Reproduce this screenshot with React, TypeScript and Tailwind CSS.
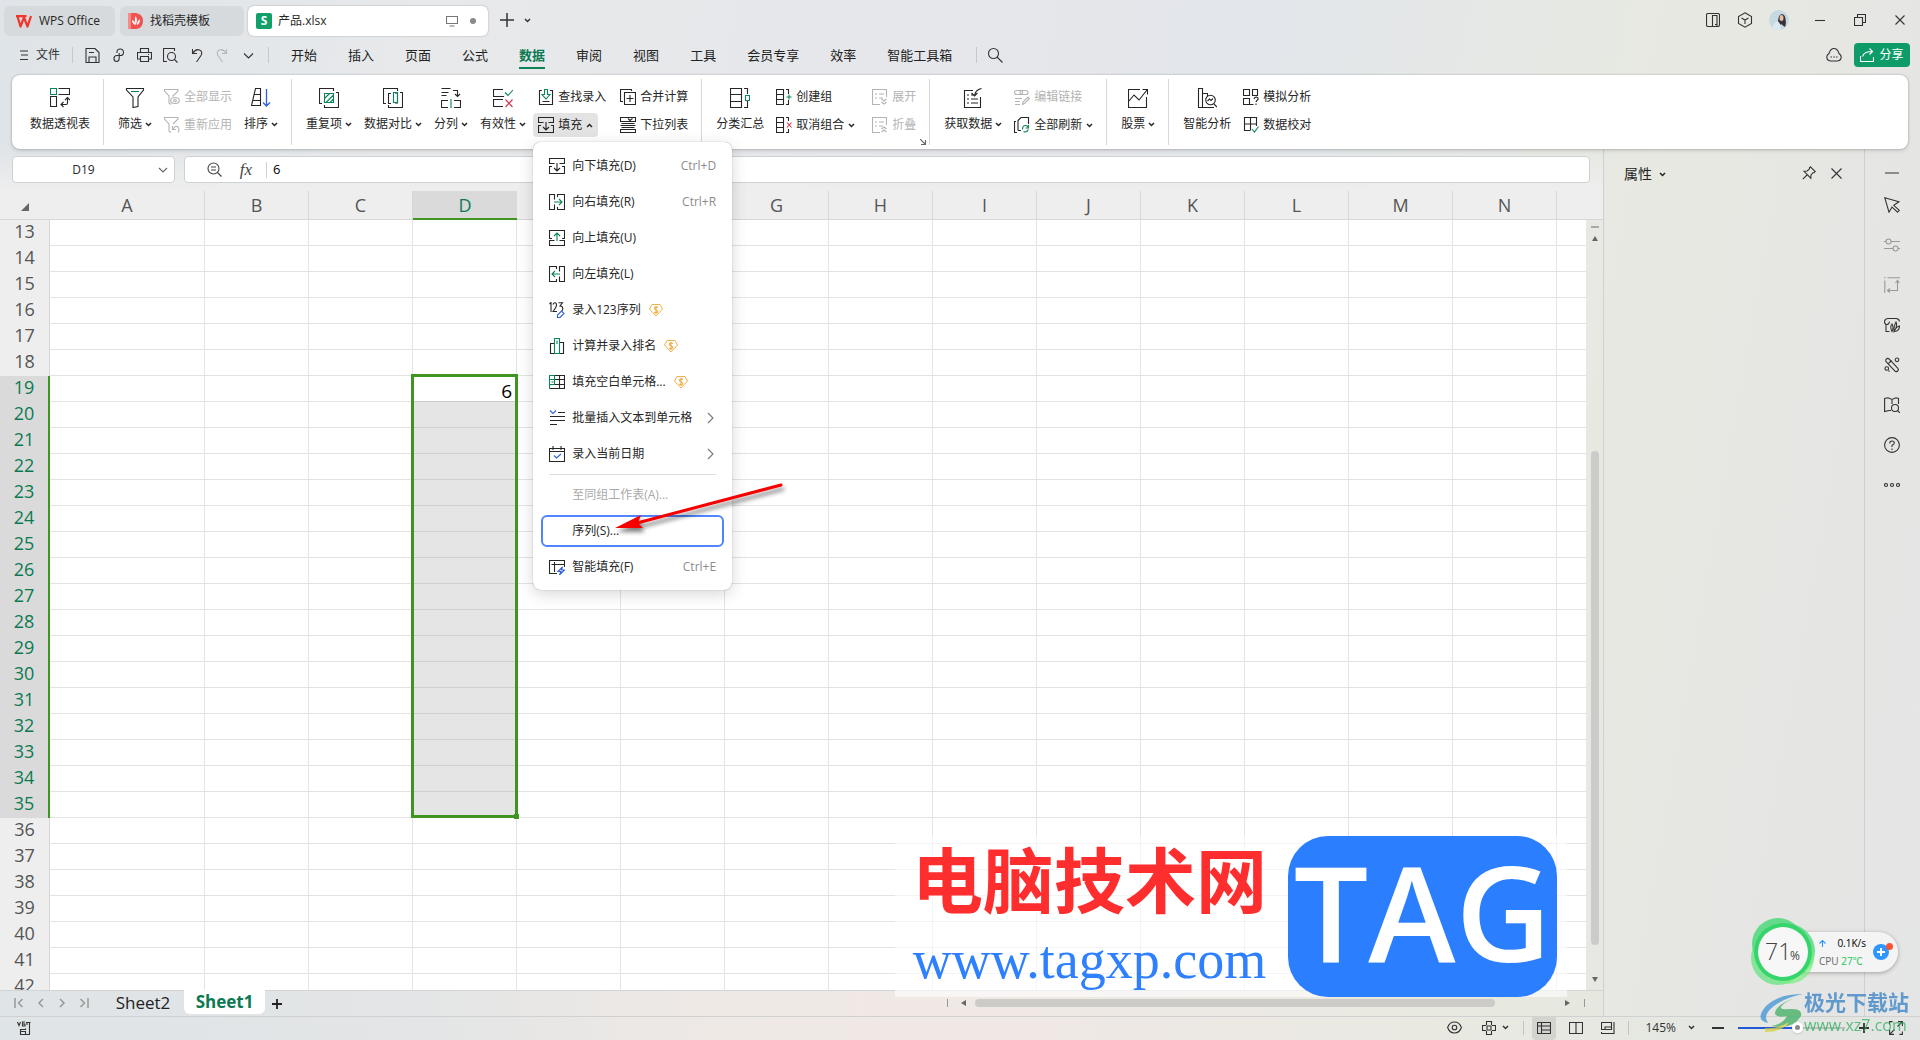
import { ReactNode } from "react";

const COLUMNS = ["A", "B", "C", "D", "E", "F", "G", "H", "I", "J", "K", "L", "M", "N"];
const ROWS = Array.from({ length: 30 }, (_, i) => i + 13);
const MENU_TABS = ["开始", "插入", "页面", "公式", "数据", "审阅", "视图", "工具", "会员专享", "效率", "智能工具箱"];

const G = "#0b8457";
const B = "#2f5fe0";
const R = "#d0344f";

interface IconProps {
    size?: number;
    className?: string;
    children: ReactNode;
}

function Icon({ size = 16, className = "", children }: IconProps) {
    return (
        <svg
            width={size}
            height={size}
            viewBox={`0 0 ${size} ${size}`}
            fill="none"
            stroke="currentColor"
            strokeWidth={1.1}
            className={`shrink-0 ${className}`}
            aria-hidden="true"
        >
            {children}
        </svg>
    );
}

function Chevron({ up = false }: { up?: boolean }) {
    return (
        <svg width="7" height="5" viewBox="0 0 7 5" fill="none" stroke="currentColor" strokeWidth="1.5" className="shrink-0" aria-hidden="true">
            <path d={up ? "M1 4l2.5-2.5L6 4" : "M1 1l2.5 2.5L6 1"} />
        </svg>
    );
}

/* ---------- ribbon icons, 20px ---------- */

const pivotIcon = (
    <Icon size={20}>
        <path d="M.5.5h6v6h-6z" stroke={G} />
        <path d="M8.5.5h11v6h-11M.5 8.5h6v10h-6zM11 16.500h5q1.500 0 1.500-1.500V10M13.500 14L11 16.500l2.500 2.500M15 12l2.500-2.500L20 12" />
    </Icon>
);
const filterIcon = (
    <Icon size={20}>
        <path d="M1.500.5h17v1.500L13 9v9.500l-5 1V9L1.500 2z" />
        <path d="M6 3.500h8" stroke={G} />
    </Icon>
);
const sortIcon = (
    <Icon size={20}>
        <path d="M4.500.5h5v17h-9zM3.500 6.500h6M2 12.500h7.500" />
        <path d="M15.500 1v16.500M12 14.500l3.500 3.500 3.500-3.500" stroke={B} strokeWidth={1.300} />
    </Icon>
);
const duplicateIcon = (
    <Icon size={20}>
        <path d="M3 15.500H.5V.5h14V3M17 4.500h2.500v15h-14V17" />
        <path d="M5.500 5.500h9v9h-9zM5.500 10.500l5-5M7 14.500l7.500-7.500M11 14.500l3.500-3.500" stroke={G} />
    </Icon>
);
const compareIcon = (
    <Icon size={20}>
        <path d="M3 15.500H.5V.5h14V3M17 4.500h2.500v15h-14V17M8 5.500H5.500v10H8M12 5h2.500v10H12" />
        <path d="M10.500 4.500h4v10h-4z" stroke={G} />
    </Icon>
);
const splitIcon = (
    <Icon size={20}>
        <path d="M.5.5h9M.5 4.500h7M.5 7.500h5M12 2.500h4.500v6M14 6l2.500 2.500L19 6M7 12.500H.5v7H7M13 12.500h6.500v7H13" />
        <path d="M10 11v9" stroke={G} />
    </Icon>
);
const validIcon = (
    <Icon size={20}>
        <path d="M10 1.500H.5v7H11M10 11.500H.5v7H10" />
        <path d="M12 4.500l3 3 5-5.500" stroke={G} />
        <path d="M12.500 11.500l7 7.500M19.500 11.500l-7 7.500" stroke={R} />
    </Icon>
);
const subtotalIcon = (
    <Icon size={20}>
        <path d="M.5.5h11v19H.5zM.5 6.500h11M.5 13.500h11M14 .5h3.500V6M14 19.500h3.500V13" />
        <path d="M15.500 7.500h4v5h-4z" stroke={G} />
    </Icon>
);
const getDataIcon = (
    <Icon size={20}>
        <path d="M10 2.500H1.500v17h16V9M4 7h2M8 7h2M4 11h2M8 11h7M4 15h2M8 15h7M18.500.5Q12 2 11.500 8M8.500 5l3 3 3-3" />
    </Icon>
);
const stockIcon = (
    <Icon size={20}>
        <path d="M12 1.500H.5v18h18V9M1 13l5-6 5 5 8-10M14.500 1.500h5v5" />
    </Icon>
);
const analysisIcon = (
    <Icon size={20}>
        <path d="M9.500 19.500h-8V.5h4v19M5.500 5.500h5V8M9 19.500h8" />
        <circle cx="13.500" cy="12" r="4.800" />
        <path d="M10.500 13l2-2 1.500 1.500 2-2M17 16l3 3" />
    </Icon>
);

/* ---------- ribbon and menu icons, 16px ---------- */

const showAllIcon = (
    <Icon>
        <path d="M8.500 7.500l5.500-5.500V.5H.5V2l4.500 5V14l2 1.500" />
        <ellipse cx="11" cy="11.500" rx="4.300" ry="3" />
        <circle cx="11" cy="11.500" r="1.300" />
    </Icon>
);
const reapplyIcon = (
    <Icon>
        <path d="M9 7l5-5V.5H.5V2L5 7v7l2 1.500M8.500 9v3.500h3.500M9 12q2.500-4 5-2 2 3 0 5.500" />
    </Icon>
);
const lookupIcon = (
    <Icon>
        <path d="M4 1.500H1.500v14h13v-14H12M4.500 12.500h7" />
        <path d="M6.500.5h3v5H12L8 10 4 5.500h2.500z" stroke={G} />
    </Icon>
);
const fillDownIcon = (
    <Icon>
        <path d="M5.500 5.500h-5v-5h15v5h-5M3 8.500H.5v7h15v-7H13M8 5v8M5 10l3 3 3-3" />
    </Icon>
);
const fillRightIcon = (
    <Icon>
        <path d="M5.500 5.500v-5h-5v15h5v-5M8.500 3V.5h7v15h-7V13" />
        <path d="M5 8h8M10 5l3 3-3 3" stroke={G} />
    </Icon>
);
const fillUpIcon = (
    <Icon>
        <path d="M5.500 10.500h-5v5h15v-5h-5M3 8.500H.5v-8h15v8H13" />
        <path d="M8 11V3M5 6l3-3 3 3" stroke={G} />
    </Icon>
);
const fillLeftIcon = (
    <Icon>
        <path d="M10.500 5.500v-5h5v15h-5v-5M7.500 3V.5h-7v15h7V13" />
        <path d="M11 8H3M6 5L3 8l3 3" stroke={G} />
    </Icon>
);
const consolidateIcon = (
    <Icon>
        <path d="M3 12.500H.5v-12h11V2M4.500 3.500h11v12h-11zM10 6v7M6.500 9.500h7" />
    </Icon>
);
const dropListIcon = (
    <Icon>
        <path d="M.5.5h15v4H.5zM1.500 6.500h13M.5 8.500h15M1.500 10.500h13M.5 12.500h15v3H.5zM8 1.500l2 2 2.500-2" />
    </Icon>
);
const groupIcon = (
    <Icon>
        <path d="M.5.5h7v15h-7zM.5 5.500h7M.5 10.500h7M10 .5h2.500V5M10 15.500h2.500V11" />
        <path d="M13 5.500v5M10.500 8h5" stroke={G} />
    </Icon>
);
const ungroupIcon = (
    <Icon>
        <path d="M.5.5h7v15h-7zM.5 5.500h7M.5 10.500h7M10 .5h2.500V4M10 15.500h2.500V12" />
        <path d="M11 5.500l4.500 5M15.500 5.500l-4.500 5" stroke={R} />
    </Icon>
);
const expandIcon = (
    <Icon>
        <path d="M8 15.500H.5V.5h14V8M3 5h2M7 5h5M3 9h2M7 9h4M9.500 10l2.500 2 2.500-2M9.500 13l2.500 2 2.500-2" />
    </Icon>
);
const collapseIcon = (
    <Icon>
        <path d="M8 15.500H.5V.5h14V8M3 5h2M7 5h5M3 9h2M7 9h4M9.500 12l2.500-2 2.500 2M9.500 15l2.500-2 2.500 2" />
    </Icon>
);
const editLinkIcon = (
    <Icon>
        <rect x=".6" y="1.500" width="8" height="4" rx="2" />
        <rect x="6" y="1.500" width="8" height="4" rx="2" />
        <path d="M1 9.500h7M1 12.500h5M1 15.500h5M8.500 15.500l.5-2.500 5-5 1.500 1.500-5 5z" />
    </Icon>
);
const refreshIcon = (
    <Icon>
        <path d="M3 15.500H.5v-11H2M4 13.500V3.500l3-3h7.500V7M4 13.500h3" />
        <path d="M14.500 8v3h-3M8.500 12.500q0-4 3-4 2 0 3 2M14.500 12.500q-2 3.500-5 2" stroke={G} />
    </Icon>
);
const whatIfIcon = (
    <Icon>
        <path d="M.5.5h6v6h-6zM9.500.5h5v6h-5zM.5 9.500h6v6h-6zM6.500 15.500h4M11 10q.5-2 2.500-2 2 .5 1.500 2.500-1.500 1-2 2.500M13 14.500v1.500" />
    </Icon>
);
const proofIcon = (
    <Icon>
        <path d="M7 13.500H1.500V.5h12V9M1.500 7h12M7.500.5v13" />
        <path d="M9 12l2.500 3L15.500 9.500" stroke={G} />
    </Icon>
);
const seriesIcon = (
    <Icon>
        <path d="M.5 2L2 .5V10M4 2.500q.5-1.800 2-1.800T7.500 3q0 2-3.500 6.500H8M9.500.800h4L11 4q2.800 0 2.800 2.800 0 1.500-1 2" />
        <path d="M8.500 15.500v-2.500l4-4 2.500 2.500-4 4z" stroke={B} />
    </Icon>
);
const rankIcon = (
    <Icon>
        <path d="M5 5.500H1.500v10H5M11 4.500h3.500v11H11" />
        <path d="M5.500.5h5v15h-5zM7.500 3H8v3" stroke={G} />
    </Icon>
);
const blankIcon = (
    <Icon>
        <path d="M5.500 1.500h10v13h-15M10.500 1v14M5.500 5.500h10M5.500 10.500h10" />
        <path d="M5.500 1.500h-5v13M.5 5.500h5v5h-5M2.500 8h2M5.500 1v4" stroke={G} />
    </Icon>
);
const batchIcon = (
    <Icon>
        <path d="M9 2.500h7M1 6.500h15M1 10.500h15M1 14.500h7" />
        <path d="M1 .5l3 3 3-3" stroke={B} />
    </Icon>
);
const dateIcon = (
    <Icon>
        <path d="M.5 2.500h15v13H.5zM.5 5.500h15M4 0v4M12 0v4" />
        <path d="M5 9.500l2.500 2.500L12 8" stroke={B} />
    </Icon>
);
const smartFillIcon = (
    <Icon>
        <path d="M8 14.500H.5V1.500h15V8M2.500 5.500h13M5.500 3v10" />
        <path d="M13.500 8L9 12.500h3L10.500 16l5-5h-3z" stroke={B} />
    </Icon>
);

const MENU_ITEMS = [
    { icon: fillDownIcon, label: "向下填充(D)", hint: "Ctrl+D" },
    { icon: fillRightIcon, label: "向右填充(R)", hint: "Ctrl+R" },
    { icon: fillUpIcon, label: "向上填充(U)" },
    { icon: fillLeftIcon, label: "向左填充(L)" },
    { icon: seriesIcon, label: "录入123序列", vip: true },
    { icon: rankIcon, label: "计算并录入排名", vip: true },
    { icon: blankIcon, label: "填充空白单元格...", vip: true },
    { icon: batchIcon, label: "批量插入文本到单元格", sub: true },
    { icon: dateIcon, label: "录入当前日期", sub: true },
];

function BigButton({ icon, label, drop }: { icon: ReactNode; label: string; drop?: boolean }) {
    return (
        <button className="flex flex-col items-center gap-2 pt-[13px]">
            {icon}
            <span className="flex items-center gap-[3px] leading-4 whitespace-nowrap">
                {label}
                {drop && <Chevron />}
            </span>
        </button>
    );
}

interface SmallButtonProps {
    icon: ReactNode;
    label: string;
    drop?: boolean;
    open?: boolean;
    disabled?: boolean;
}

function SmallButton({ icon, label, drop, open, disabled }: SmallButtonProps) {
    return (
        <button
            disabled={disabled}
            className={`flex h-6 items-center gap-1 rounded px-[5px] whitespace-nowrap ${open ? "bg-[#e3e3e3]" : ""} ${disabled ? "text-[#b4b4b4]" : ""}`}
        >
            {icon}
            <span>{label}</span>
            {drop && <Chevron up={open} />}
        </button>
    );
}

function SmallColumn({ children }: { children: ReactNode }) {
    return <div className="-mx-[5px] flex flex-col items-start gap-1 pt-[10px]">{children}</div>;
}

function Group({ children, last }: { children: ReactNode; last?: boolean }) {
    return (
        <div className="flex">
            <div className="flex items-start gap-3 px-[14px]">{children}</div>
            {!last && <div className="mt-1 -ml-px h-[66px] w-px bg-[#d8d8d8]" />}
        </div>
    );
}

function VipBadge() {
    return (
        <svg width="14" height="14" viewBox="0 0 14 14" fill="none" stroke="#f0b04a" className="shrink-0" aria-hidden="true">
            <path d="M3 1.500h8l2.500 4.500L7 13 .5 6z" />
            <path d="M9 4.500Q7 3.300 5.800 4.500T7 7q2 .6 1.500 2T5 9.300M7 3v8" strokeWidth="1.200" />
        </svg>
    );
}

function FillMenu() {
    return (
        <div className="absolute top-full left-0 z-30 mt-[5px] w-[199px] rounded-lg bg-white pt-2 pb-[7px] shadow-[0_0_1px_rgba(0,0,0,0.45),0_4px_16px_rgba(0,0,0,0.16)]">
            <ul className="flex flex-col gap-1">
                {MENU_ITEMS.map((item) => (
                    <li key={item.label} className="mx-2">
                        <button className="flex h-8 w-full items-center px-2 text-left whitespace-nowrap">
                            {item.icon}
                            <span className="ml-[7px]">{item.label}</span>
                            {item.vip && <span className="ml-2"><VipBadge /></span>}
                            {item.hint && <span className="ml-auto text-[#8c8c8c]">{item.hint}</span>}
                            {item.sub && (
                                <Icon size={12} className="ml-auto text-[#777]">
                                    <path d="M4 1l5 5-5 5" />
                                </Icon>
                            )}
                        </button>
                    </li>
                ))}
                <li className="mx-4 h-px bg-[#dedede]" />
                <li className="mx-2">
                    <button disabled className="flex h-8 w-full items-center pl-[31px] text-[#a9a9a9]">至同组工作表(A)...</button>
                </li>
                <li className="mx-2">
                    <button className="flex h-8 w-full items-center rounded-md border-2 border-[#4f86ff] pl-[29px]">序列(S)...</button>
                </li>
                <li className="mx-2">
                    <button className="flex h-8 w-full items-center px-2">
                        {smartFillIcon}
                        <span className="ml-[7px]">智能填充(F)</span>
                        <span className="ml-auto text-[#8c8c8c]">Ctrl+E</span>
                    </button>
                </li>
            </ul>
            <svg width="190" height="64" viewBox="0 0 190 64" className="pointer-events-none absolute top-[334px] left-[72px] drop-shadow-[2px_4px_2px_rgba(0,0,0,0.5)]" aria-hidden="true">
                <path d="M32 47L176 9" stroke="#f60000" strokeWidth="3" strokeLinecap="round" />
                <path d="M10 52L36 39l-3 8 5 5z" fill="#f60000" />
            </svg>
        </div>
    );
}

function TitleBar() {
    return (
        <div className="flex h-10 items-center pl-1">
            <button className="mt-[2px] flex h-[30px] w-[111px] items-center gap-[7px] rounded-md bg-[#d6dadd] pl-3">
                <svg width="16" height="13" viewBox="0 0 16 13" fill="none" aria-hidden="true">
                    <path d="M0 1.200h10.500M1.500 1.500l3 10 3.500-9 3.500 9L15 1" stroke="#f0352b" strokeWidth="2.200" strokeLinejoin="round" />
                </svg>
                WPS Office
            </button>
            <button className="mt-[2px] ml-[5px] flex h-[30px] w-[124px] items-center gap-[7px] rounded-md bg-[#d6dadd] pl-2">
                <svg width="15" height="16" viewBox="0 0 15 16" aria-hidden="true">
                    <path d="M0 0h8q7 1 7 8t-7 8H0z" fill="#f0524f" />
                    <path d="M0 0h3v16H0z" fill="#f98a86" />
                    <path d="M7.500 3q2.500 3 .5 9-2-4-.5-9zM4 7q3 1 3.500 5Q4 11 4 7zM12 6q-3 2-3 6 3-1 3-6z" fill="#fff" />
                </svg>
                找稻壳模板
            </button>
            <div className="mt-[2px] ml-1 flex h-[30px] w-[240px] items-center rounded-md bg-white pr-3 pl-2 shadow-[0_0_2px_rgba(0,0,0,0.3)]">
                <span className="relative flex size-4 items-center justify-center rounded-xs bg-[#12a06a] font-bold text-white">S</span>
                <span className="ml-[6px]">产品.xlsx</span>
                <Icon size={12} className="ml-auto text-[#777]">
                    <path d="M.5 1.500h11v7H.5zM3.500 11h5" />
                </Icon>
                <span className="ml-3 size-[6px] rounded-full bg-[#8a8a8a]" />
            </div>
            <button aria-label="新建" className="ml-3 text-[#333]">
                <Icon size={14}><path d="M7 0v14M0 7h14" strokeWidth={1.500} /></Icon>
            </button>
            <button aria-label="标签列表" className="ml-[10px] text-[#333]"><Chevron /></button>

            <div className="ml-auto flex items-center text-[#333]">
                <button aria-label="侧栏">
                    <Icon size={14}><rect x=".5" y=".5" width="13" height="13" rx="1.500" /><path d="M6.500 13.500v-11h4.500v11M9 11.500h1.500" /></Icon>
                </button>
                <button aria-label="应用" className="ml-[17px]">
                    <Icon size={16}><path d="M8 .8L14.500 4.500v7L8 15.200 1.500 11.500v-7zM4.500 6L8 8l3.500-2M8 8v4" /></Icon>
                </button>
                <button aria-label="帐户" className="ml-4">
                    <svg width="20" height="20" viewBox="0 0 20 20" className="rounded-full bg-[#c5d9e3]" aria-hidden="true">
                        <path d="M6 17q1-3 3-6 0-6 4-7 3.500 1 3.500 5 1 5-.5 8l-4-3-2 2z" fill="#3a3238" />
                        <ellipse cx="12.500" cy="8" rx="2" ry="3" fill="#e9bfa9" />
                        <path d="M3 20q1-8 6-9l2 3 1 6z" fill="#dbe9f1" />
                    </svg>
                </button>
                <button aria-label="最小化" className="ml-[26px]"><Icon size={10}><path d="M0 5.500h10" /></Icon></button>
                <button aria-label="还原" className="ml-[29px]">
                    <Icon size={12}><path d="M.5 3.500h8v8h-8zM3.500 3.500v-3h8v8h-3" /></Icon>
                </button>
                <button aria-label="关闭" className="mr-[15px] ml-[29px]"><Icon size={10}><path d="M.5.5l9 9M9.500.5l-9 9" /></Icon></button>
            </div>
        </div>
    );
}

function MenuBar() {
    return (
        <div className="flex h-[35px] items-start text-[#333]">
            <button className="flex h-[30px] items-center gap-[6px] pl-5">
                <Icon size={10}><path d="M0 1h8M1 5h7M0 9.500h8" /></Icon>
                文件
            </button>
            <div className="mt-[7px] ml-3 h-4 w-px bg-[#c6c9cc]" />
            <div className="flex h-[30px] items-center gap-[11px] pl-3">
                <button aria-label="保存"><Icon size={15}><path d="M1 .5h9l4 4v10H1zM4 14.500V9h7v5.500M4 4.500h5" /></Icon></button>
                <button aria-label="输出"><Icon size={15}><path d="M6 5V4q0-3 3.200-3t3.300 3.300T9 7.500H6Q3 7.500 3 10.500t2.500 3 2.700-3V5" /></Icon></button>
                <button aria-label="打印"><Icon size={15}><path d="M3.500 4.500v-4h8v4M3.500 11h-3V4.500h14V11h-3M3.500 8.500h8v5h-8zM11 6.500h1" /></Icon></button>
                <button aria-label="打印预览"><Icon size={15}><path d="M4 13.500H.5V.5h11V3M11.500 11.500l3 3" /><circle cx="8.500" cy="8.500" r="4" /></Icon></button>
                <button aria-label="撤销"><Icon size={15}><path d="M3.500 1v4.500H8M3.500 5.500Q7 .500 10.500 2t1.500 5.500L7.500 14" /></Icon></button>
                <button aria-label="恢复" className="text-[#b3b6b9]"><Icon size={15}><path d="M11.500 1v4.500H7M11.500 5.500Q8 .500 4.500 2T3 7.500L7.500 14" /></Icon></button>
                <button aria-label="更多"><Icon size={15}><path d="M3 5.500L7.500 10 12 5.500" /></Icon></button>
            </div>
            <div className="mt-[7px] ml-3 h-4 w-px bg-[#c6c9cc]" />
            <nav className="flex gap-[31px] pl-[22px] text-[13px] text-[#222]">
                {MENU_TABS.map((tab) => (
                    <a
                        key={tab}
                        href="#"
                        className={`h-[29px] border-b-2 pt-[6px] leading-[18px] ${tab === "数据" ? "border-[#0b8457] font-bold text-[#0b7a52]" : "border-transparent"}`}
                    >
                        {tab}
                    </a>
                ))}
            </nav>
            <div className="mt-[7px] ml-6 h-4 w-px bg-[#c6c9cc]" />
            <button aria-label="搜索" className="mt-[7px] ml-[10px]">
                <Icon size={16}><circle cx="6.500" cy="6.500" r="5" /><path d="M10 10l5.500 5.500" /></Icon>
            </button>
            <div className="ml-auto flex items-center gap-3 pt-[3px] pr-[10px]">
                <button aria-label="云同步"><Icon size={16}><path d="M4.500 14Q.8 13.500.8 10q0-2 2.200-3.500Q4.500 1.500 8 1.500t5 5q2.200 1.500 2.200 3.500 0 3.500-3.700 4zM4.500 10h1.500M7.300 10h1.500M10 10h1.500" /></Icon></button>
                <button className="flex h-6 w-14 items-center justify-center gap-[5px] rounded bg-[#0f9b68] text-white">
                    <Icon size={14}><path d="M.5 8v5.500h13V9M2.500 8.500Q4 3.500 12 3.500M9.500.5l3 3-3 3" /></Icon>
                    分享
                </button>
            </div>
        </div>
    );
}

function Ribbon() {
    return (
        <div className="relative z-20 mx-3 flex h-[74px] rounded-lg bg-white pl-1 shadow-[0_0_2px_rgba(0,0,0,0.3),0_2px_4px_rgba(0,0,0,0.12)]">
            <Group>
                <BigButton icon={pivotIcon} label="数据透视表" />
            </Group>
            <Group>
                <BigButton icon={filterIcon} label="筛选" drop />
                <SmallColumn>
                    <SmallButton icon={showAllIcon} label="全部显示" disabled />
                    <SmallButton icon={reapplyIcon} label="重新应用" disabled />
                </SmallColumn>
                <BigButton icon={sortIcon} label="排序" drop />
            </Group>
            <Group>
                <BigButton icon={duplicateIcon} label="重复项" drop />
                <BigButton icon={compareIcon} label="数据对比" drop />
                <BigButton icon={splitIcon} label="分列" drop />
                <BigButton icon={validIcon} label="有效性" drop />
                <div className="flex gap-[14px]">
                    <SmallColumn>
                        <SmallButton icon={lookupIcon} label="查找录入" />
                        <div className="relative">
                            <SmallButton icon={fillDownIcon} label="填充" drop open />
                            <FillMenu />
                        </div>
                    </SmallColumn>
                    <SmallColumn>
                        <SmallButton icon={consolidateIcon} label="合并计算" />
                        <SmallButton icon={dropListIcon} label="下拉列表" />
                    </SmallColumn>
                </div>
            </Group>
            <div className="relative">
                <Group>
                    <BigButton icon={subtotalIcon} label="分类汇总" />
                    <div className="flex gap-[17px]">
                        <SmallColumn>
                            <SmallButton icon={groupIcon} label="创建组" />
                            <SmallButton icon={ungroupIcon} label="取消组合" drop />
                        </SmallColumn>
                        <SmallColumn>
                            <SmallButton icon={expandIcon} label="展开" disabled />
                            <SmallButton icon={collapseIcon} label="折叠" disabled />
                        </SmallColumn>
                    </div>
                </Group>
                <Icon size={6} className="absolute right-1 bottom-1 text-[#666]"><path d="M0 0l5 5M5.500 1v4.500H1" /></Icon>
            </div>
            <Group>
                <BigButton icon={getDataIcon} label="获取数据" drop />
                <SmallColumn>
                    <SmallButton icon={editLinkIcon} label="编辑链接" disabled />
                    <SmallButton icon={refreshIcon} label="全部刷新" drop />
                </SmallColumn>
            </Group>
            <Group>
                <BigButton icon={stockIcon} label="股票" drop />
            </Group>
            <Group last>
                <BigButton icon={analysisIcon} label="智能分析" />
                <SmallColumn>
                    <SmallButton icon={whatIfIcon} label="模拟分析" />
                    <SmallButton icon={proofIcon} label="数据校对" />
                </SmallColumn>
            </Group>
        </div>
    );
}

function FormulaBar() {
    return (
        <div className="flex h-[42px] gap-[9px] bg-linear-to-b from-transparent to-[#eee] pt-[7px] pr-[13px] pl-3">
            <div className="relative h-[27px] w-[163px] rounded border border-[#cfd2d3] bg-white">
                <select aria-label="名称框" className="size-full appearance-none pr-5 text-center text-[12px] outline-none [text-align-last:center]">
                    <option>D19</option>
                </select>
                <Icon size={10} className="pointer-events-none absolute top-2 right-[6px] text-[#666]"><path d="M1 3l4 4 4-4" /></Icon>
            </div>
            <div className="flex h-[27px] flex-1 items-center rounded border border-[#cfd2d3] bg-white text-[#444]">
                <button aria-label="查看" className="ml-[22px]">
                    <Icon size={15}><circle cx="6.500" cy="6.500" r="5.500" /><path d="M4 5h5M4 8h5M10.500 10.500l4 4" /></Icon>
                </button>
                <button className="ml-4 w-4 font-['Liberation_Serif',serif] text-[17px] leading-none italic">fx</button>
                <div className="ml-3 h-4 w-px bg-[#d0d0d0]" />
                <input aria-label="编辑栏" defaultValue="6" className="ml-[6px] flex-1 text-[13px] text-black outline-none" />
            </div>
        </div>
    );
}

function Sheet() {
    return (
        <div className="flex min-h-0 flex-1">
            <div className="min-w-0 flex-1 overflow-hidden bg-white">
                <table className="w-full table-fixed border-separate border-spacing-0 font-['Open_Sans',sans-serif] text-[18px]">
                    <colgroup>
                        <col className="w-[50px]" />
                        {COLUMNS.map((c) => (
                            <col key={c} className={c === "A" ? "w-[155px]" : "w-[104px]"} />
                        ))}
                        <col />
                    </colgroup>
                    <thead>
                        <tr className="h-[29px] leading-6 text-[#555]">
                            <th className="border-b border-[#d6d6d6] bg-[#eee] p-0">
                                <svg width="10" height="10" viewBox="0 0 10 10" className="mt-1 ml-5" aria-hidden="true"><path d="M9 1v8H1z" fill="#666" /></svg>
                            </th>
                            {COLUMNS.map((c) => (
                                <th
                                    key={c}
                                    className={`p-0 font-normal ${c === "D" ? "border-b-2 border-[#3f9422] bg-[#dadada] text-[#0b7a52]" : "border-r border-b border-[#d6d6d6] bg-[#eee]"}`}
                                >
                                    {c}
                                </th>
                            ))}
                            <th className="border-b border-[#d6d6d6] bg-[#eee] p-0" />
                        </tr>
                    </thead>
                    <tbody>
                        {ROWS.map((r) => {
                            const selected = r >= 19 && r <= 35;
                            return (
                                <tr key={r} className="h-[26px] leading-5">
                                    <th
                                        className={`p-0 pb-[5px] font-normal ${selected ? "border-r-2 border-[#3f9422] bg-[#dadada] text-[#0b7a52]" : "border-r border-[#d6d6d6] bg-[#eee] text-[#555]"}`}
                                    >
                                        {r}
                                    </th>
                                    {COLUMNS.map((c) => {
                                        if (c === "D" && r === 19) {
                                            return (
                                                <td key={c} className="relative border-r border-b border-[#ccc] p-0 pr-1 pt-1 text-right text-[19px] text-black">
                                                    6
                                                    <div className="absolute -top-[2px] -right-[2px] -left-[2px] h-[444px] border-3 border-[#3f9422]">
                                                        <span className="absolute -right-1 -bottom-1 size-[5px] bg-[#3f9422]" />
                                                    </div>
                                                </td>
                                            );
                                        }
                                        return (
                                            <td
                                                key={c}
                                                className={`border-r border-b p-0 ${c === "D" && selected ? "border-[#cfcfcf] bg-[#e5e5e5]" : "border-[#e3e3e3]"}`}
                                            />
                                        );
                                    })}
                                    <td className="border-b border-[#e3e3e3] p-0" />
                                </tr>
                            );
                        })}
                    </tbody>
                </table>
            </div>
            <div className="flex w-[17px] flex-col">
                <div className="h-[29px] border-b border-[#d6d6d6] bg-[#eee]" />
                <div className="flex flex-1 flex-col items-center pb-2 text-[#666]">
                    <div className="mt-[6px] h-[2px] w-2 bg-[#aaa]" />
                    <svg width="6" height="5" viewBox="0 0 6 5" className="mt-2" aria-hidden="true"><path d="M3 0l3 5H0z" fill="#666" /></svg>
                    <div className="flex-[210]" />
                    <div className="w-2 flex-[493] rounded-full bg-[#cbcbca]" />
                    <div className="flex-[32]" />
                    <svg width="6" height="5" viewBox="0 0 6 5" aria-hidden="true"><path d="M0 0h6L3 5z" fill="#666" /></svg>
                </div>
            </div>
        </div>
    );
}

function SheetTabs() {
    return (
        <div className="flex h-[26px] items-start border-t border-[#d3d5d5] bg-[linear-gradient(90deg,#dfe4e7_0%,#e3e5e6_25%,#efe9e5_45%,#f0e8e5_62%,#e8e9e1_90%,#e6e8e0_100%)] font-['Open_Sans',sans-serif]">
            <div className="flex h-6 w-[97px] items-center justify-between pr-2 pl-[14px] text-[#999]">
                <button aria-label="第一张"><Icon size={10}><path d="M1 0v10M8.500 1l-4 4 4 4" strokeWidth={1.500} /></Icon></button>
                <button aria-label="上一张"><Icon size={10}><path d="M7 1L3 5l4 4" strokeWidth={1.500} /></Icon></button>
                <button aria-label="下一张"><Icon size={10}><path d="M3 1l4 4-4 4" strokeWidth={1.500} /></Icon></button>
                <button aria-label="最后一张"><Icon size={10}><path d="M1.500 1l4 4-4 4M9 0v10" strokeWidth={1.500} /></Icon></button>
            </div>
            <button className="h-6 w-[87px] pl-[5px] text-[17px] leading-[22px] text-[#222]">Sheet2</button>
            <button className="-mt-px h-6 w-[81px] rounded-b-md bg-white text-[17px] leading-6 font-bold text-[#0b7a52]">Sheet1</button>
            <button aria-label="新建工作表" className="mt-2 ml-[7px] text-[#222]"><Icon size={10}><path d="M5 0v10M0 5h10" strokeWidth={1.800} /></Icon></button>
            <div className="ml-auto flex h-6 w-[656px] items-center pr-[18px]">
                <div className="h-2 w-px bg-[#999]" />
                <svg width="5" height="6" viewBox="0 0 5 6" className="ml-[13px]" aria-hidden="true"><path d="M5 0v6L0 3z" fill="#666" /></svg>
                <div className="ml-[9px] h-2 flex-1 rounded-full bg-[#cdcbc8]" />
                <svg width="5" height="6" viewBox="0 0 5 6" className="ml-[70px]" aria-hidden="true"><path d="M0 0v6l5-3z" fill="#666" /></svg>
                <div className="ml-[14px] h-2 w-px bg-[#999]" />
            </div>
        </div>
    );
}

function PropertyPanel() {
    return (
        <aside className="flex w-[261px] items-start border-l border-[#cdd0cf] pt-[15px] pr-[22px] pl-5 text-[#333]">
            <button className="flex items-center gap-[7px] text-[14px] leading-5 text-[#222]">属性 <Chevron /></button>
            <button aria-label="固定" className="mt-[2px] ml-auto">
                <Icon size={14}><path d="M8.500.8l4.700 4.700-1.200 1.200-1 0L9 9l-.2 3.200L2 5.300 5.200 5 7.500 2.800V1.800zM5 9L.8 13.200" /></Icon>
            </button>
            <button aria-label="关闭面板" className="mt-1 ml-[15px]"><Icon size={11}><path d="M.5.5l10 10M10.500.5l-10 10" /></Icon></button>
        </aside>
    );
}

function ToolRail() {
    return (
        <aside className="flex w-14 flex-col items-center border-l border-[#cdd0cf] pt-4 pr-[2px] text-[#333]">
            <button aria-label="收起" className="flex h-4 items-center"><span className="h-[2px] w-[14px] bg-[#8a8d8d]" /></button>
            <div className="mt-4 flex flex-col gap-6">
                <button aria-label="选择"><Icon><path d="M.8.8l14 4-5 3.500 5.500 5-1.700 1.900L8 10l-3 5.200z" /></Icon></button>
                <button aria-label="样式" className="text-[#999]"><Icon><path d="M0 4.500h2M7 4.500h9M0 11.500h9M14 11.500h2" /><circle cx="4.500" cy="4.500" r="2.500" /><circle cx="11.500" cy="11.500" r="2.500" /></Icon></button>
                <button aria-label="表格" className="text-[#999]"><Icon><path d="M0 .8h1.500M3.500.8H16M.8 3.500V16M4 13.500h9.500V4M6 11.500l-2.500 2L6 15.500M11.500 6l2-2.500 2 2.500" /></Icon></button>
                <button aria-label="素材"><Icon><path d="M2 7.500Q0 6 .6 4 1.500 1.500 4 1.500h8q3 0 3.500 3M2 7v7.500h3.500M2 7.500Q5 8 5.500 4.500M8 14.500Q5.500 10 8 7q2 3 0 7.500zM10 14.500Q9.500 9 12 5q2 4-2 9.500zM10.500 14.500Q11 10.500 15.500 9q0 5-5 5.500z" /></Icon></button>
                <button aria-label="工具"><Icon><rect x="6" y="-.2" width="4" height="16.400" rx="2" transform="rotate(-43 8 8)" /><path d="M4.500 6.500l3-3" /><circle cx="13" cy="2.800" r="1.800" /><circle cx="2.800" cy="11.500" r="1.800" /><path d="M4.500 13.500l1 1" /></Icon></button>
                <button aria-label="查阅"><Icon><path d="M7 13.500H5L.6 14.500V1.500L4 .8 8 2.500l4-1.700 2.500.7V7M8 2.500V7" /><circle cx="11" cy="11" r="3.500" /><path d="M13.500 13.500L16 16" /></Icon></button>
                <button aria-label="帮助"><Icon><circle cx="8" cy="8" r="7.400" /><path d="M5.700 6.500q0-2.500 2.300-2.500t2.300 2Q10.300 7.300 8 8.300V10M8 11.500V13" /></Icon></button>
                <button aria-label="更多工具"><Icon><circle cx="2" cy="8" r="1.500" /><circle cx="8" cy="8" r="1.500" /><circle cx="14" cy="8" r="1.500" /></Icon></button>
            </div>
        </aside>
    );
}

function StatusBar() {
    return (
        <footer className="flex h-6 items-center border-t border-[#cfd0cf] bg-[linear-gradient(90deg,#dfe4e7_0%,#e3e5e6_22%,#efe9e5_38%,#f0e8e5_52%,#e8e9e1_78%,#e2e5e3_100%)] px-[17px] pb-[2px] text-[#333]">
            <button aria-label="宏"><Icon size={14}><path d="M.5 1l1.500 3.500L3.500 1M5.500 1v4h2.500V3h-2.500V1H8M9 1.500h4.500M10 4V1.500M12.500 1.500v12H3.500v-5h5v-1M3.500 10.500h5v3" /></Icon></button>
            <button aria-label="护眼模式" className="ml-auto"><Icon size={15}><path d="M.6 7.500Q2.500 2 7.500 2t6.900 5.500Q12.500 13 7.500 13T.6 7.500z" /><circle cx="7.500" cy="7.500" r="2.300" /></Icon></button>
            <button aria-label="阅读模式" className="ml-5 flex items-center gap-[6px]">
                <Icon size={14}><path d="M4.500 4V.5h5V4M4.500 10v3.500h5V10M4 4.500H.5v5H4M10 4.500h3.500v5H10M5 5h4v4H5z" /></Icon>
                <Chevron />
            </button>
            <div className="ml-[14px] h-[14px] w-px bg-[#c4c5c2]" />
            <button aria-label="普通视图" className="ml-2 flex size-6 items-center justify-center rounded bg-[#d3d4cf]"><Icon size={14}><path d="M.5 1.500h13v11H.5zM4.500 1.500v11M.5 5h13M9 5H4.500v4H13" /></Icon></button>
            <button aria-label="分页预览" className="ml-[13px]"><Icon size={14}><path d="M.5 1.500h13v11H.5zM7 1.500v11" /></Icon></button>
            <button aria-label="页面布局" className="ml-[18px]"><Icon size={14}><path d="M.5 1.500h10v7H.5zM13 1v11.500H.5V11M4 8.500V6h6.500" /></Icon></button>
            <div className="ml-[13px] h-[14px] w-px bg-[#c4c5c2]" />
            <button className="ml-4 flex items-center gap-3 whitespace-nowrap">145% <Chevron /></button>
            <button aria-label="缩小" className="ml-[17px]"><Icon size={12}><path d="M0 6h12" strokeWidth={2} /></Icon></button>
            <input
                type="range"
                aria-label="缩放"
                defaultValue="56"
                className="mx-[14px] h-[2px] w-[107px] appearance-none bg-linear-to-r from-[#2458d8] from-55% to-[#bcbfbe] to-55% [&::-webkit-slider-thumb]:size-[11px] [&::-webkit-slider-thumb]:appearance-none [&::-webkit-slider-thumb]:rounded-full [&::-webkit-slider-thumb]:border-3 [&::-webkit-slider-thumb]:border-white [&::-webkit-slider-thumb]:bg-[#888] [&::-webkit-slider-thumb]:shadow-sm"
            />
            <button aria-label="放大"><Icon size={10}><path d="M5 0v10M0 5h10" strokeWidth={1.800} /></Icon></button>
            <button aria-label="全屏" className="ml-5"><Icon size={14}><path d="M9 .6h4.400V5M13.400.6L8.500 5.500M5 13.400H.6V9M.6 13.400l4.900-4.900M.6 3.500V.6h3M13.400 10.500v2.900h-3" /></Icon></button>
        </footer>
    );
}

function TagBanner() {
    return (
        <div className="pointer-events-none absolute right-[353px] bottom-[43px] z-10 flex h-[161px] w-[672px] bg-white/60">
            <div className="flex flex-1 flex-col items-center pr-1 whitespace-nowrap">
                <div className="mt-2 text-[71px] leading-[72px] font-bold text-[#ff2e2e]">电脑技术网</div>
                <div className="mt-[14px] font-['Liberation_Serif',serif] text-[54px] leading-[60px] text-[#2f80ff]">www.tagxp.com</div>
            </div>
            <div className="mr-[10px] flex w-[269px] items-center justify-center rounded-[40px] bg-[#2b7fff] pb-3 text-[132px] leading-none font-semibold text-white">
                TAG
            </div>
        </div>
    );
}

function MonitorWidget() {
    return (
        <div className="absolute right-[22px] bottom-[54px] z-10 flex h-[68px] items-center">
            <svg width="66" height="70" viewBox="0 0 66 70" className="z-10 -mr-[18px] shrink-0" aria-hidden="true">
                <circle cx="28" cy="27" r="26" fill="#39d56e" opacity=".75" />
                <circle cx="38" cy="34" r="27" fill="#39d56e" opacity=".7" />
                <circle cx="28" cy="41" r="27" fill="#5ee27b" opacity=".7" />
                <circle cx="38" cy="41" r="26" fill="#7cec84" opacity=".7" />
                <circle cx="33" cy="35" r="29" fill="#36d56b" />
                <circle cx="33" cy="35" r="25" fill="#f6f7f6" />
                <text x="15" y="43" fontSize="23" fill="#444" fontFamily="Open Sans" fontWeight="300">71</text>
                <text x="40" y="43" fontSize="12" fill="#444" fontFamily="Open Sans">%</text>
            </svg>
            <div className="flex h-10 w-[100px] items-center rounded-r-full bg-[#f3f4f3] pr-[9px] pl-[21px] shadow-[0_1px_4px_rgba(0,0,0,0.3)]">
                <div className="flex w-[47px] flex-col text-[10px] leading-[18px] whitespace-nowrap">
                    <span className="flex items-center justify-between text-black">
                        <Icon size={7} className="text-[#2f96ff]"><path d="M3.500 7V1M.5 3.500l3-3 3 3" /></Icon>
                        0.1K/s
                    </span>
                    <span className="text-[#666]">CPU <span className="text-[#19c55b]">27℃</span></span>
                </div>
                <span className="relative ml-[7px] flex size-4 shrink-0 items-center justify-center rounded-full bg-[#2f96ff] text-white">
                    <Icon size={8}><path d="M4 0v8M0 4h8" strokeWidth={2} /></Icon>
                    <span className="absolute -top-px -right-1 size-[7px] rounded-full bg-[#fa5332]" />
                </span>
            </div>
        </div>
    );
}

function SiteMark() {
    return (
        <div className="pointer-events-none absolute right-[11px] bottom-1 z-10 flex items-center opacity-75">
            <svg width="46" height="40" viewBox="0 0 46 40" aria-hidden="true">
                <path d="M45 1Q20 1 8 13-4 27 10 30q-6-8 6-17Q26 5 45 1z" fill="#3f93d6" />
                <path d="M36 5Q16 13 17 21q2 4 12 2-5 9-16 10 22 4 30-10 2-8-12-7-9 1-8-2 2-4 13-9z" fill="#3fae62" />
                <path d="M7 35q12 1 24-6-6 10-24 10z" fill="#d4cf3f" />
            </svg>
            <div className="whitespace-nowrap">
                <div className="text-[21px] leading-6 font-bold text-[#3580c4]">极光下载站</div>
                <div className="text-[16px] leading-[22px] font-medium text-[#2fae5c]">www.xz7.com</div>
            </div>
        </div>
    );
}

export default function App() {
    return (
        <div className="relative flex h-screen flex-col overflow-hidden bg-[linear-gradient(100deg,#dfe4e8_0%,#e7e9eb_20%,#e6e7ea_40%,#e3e6eb_60%,#e7e9e1_80%,#e6e7e3_88%,#e4e5e5_100%)] font-['Open_Sans','Noto_Sans_CJK_SC',sans-serif] text-[12px] text-[#262626]">
            <TitleBar />
            <MenuBar />
            <Ribbon />
            <div className="flex min-h-0 flex-1">
                <main className="flex min-w-0 flex-1 flex-col">
                    <FormulaBar />
                    <Sheet />
                    <SheetTabs />
                </main>
                <PropertyPanel />
                <ToolRail />
            </div>
            <StatusBar />
            <TagBanner />
            <SiteMark />
            <MonitorWidget />
        </div>
    );
}
